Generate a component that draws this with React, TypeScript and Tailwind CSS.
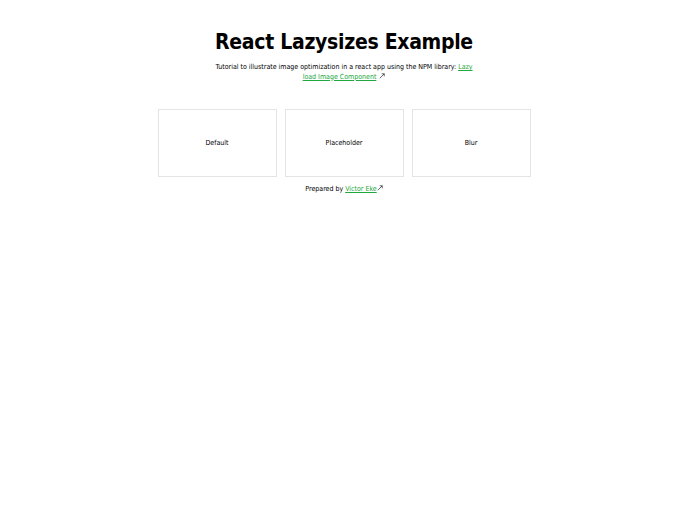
const cards = ['Default', 'Placeholder', 'Blur'];

function ExternalLink({ href, children }: { href: string; children: React.ReactNode }) {
  return (
    <a href={href} className="text-[#22a83e] underline">
      {children}
    </a>
  );
}

// small north-east arrow shown after external links
function ArrowOut({ spaced }: { spaced?: boolean }) {
  return (
    <svg
      viewBox="0 0 8 8"
      className={spaced ? 'ml-[3px] inline-block h-[6px] w-[6px] align-baseline' : 'inline-block h-[6px] w-[6px] align-baseline'}
      fill="none"
      stroke="#222"
      strokeWidth="0.9"
    >
      <path d="M1 7 L7 1" />
      <path d="M3.6 1 H7 V4.4" />
    </svg>
  );
}

export default function App() {
  return (
    <div className="min-h-screen bg-white text-black font-['DejaVu_Sans_Condensed','DejaVu_Sans',sans-serif]">
      <div className="flex flex-col items-center pt-[27px]">
        <h1 className="text-[21px] font-bold leading-[30px] tracking-[-0.3px]">React Lazysizes Example</h1>
        <p className="mt-[6px] w-[262px] text-center text-[7px] leading-[9.5px]">
          Tutorial to illustrate image optimization in a react app using the NPM library:{' '}
          <ExternalLink href="#">Lazy load Image Component</ExternalLink>
          <ArrowOut spaced />
        </p>

        <div className="mt-[27px] flex gap-[8px]">
          {cards.map((label) => (
            <div
              key={label}
              className="flex h-[68px] w-[119px] items-center justify-center border border-[#e4e4e4] text-[7px]"
            >
              {label}
            </div>
          ))}
        </div>

        <p className="mt-[8px] text-[7px] leading-[9px]">
          Prepared by <ExternalLink href="#">Victor Eke</ExternalLink>
          <ArrowOut />
        </p>
      </div>
    </div>
  );
}
